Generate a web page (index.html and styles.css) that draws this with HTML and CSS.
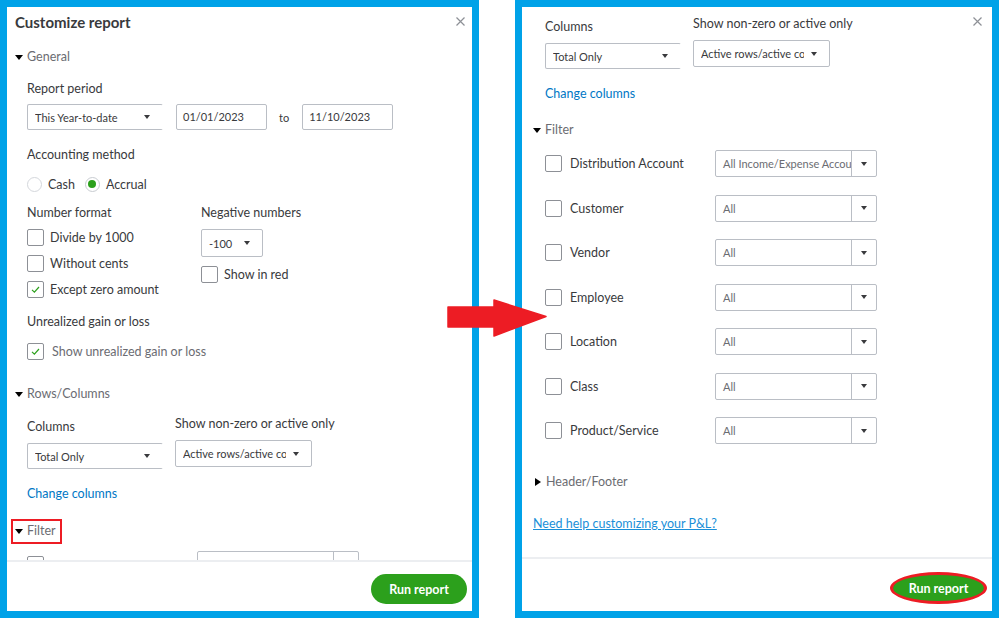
FILE: index.html
```html
<!DOCTYPE html>
<html lang="en">
<head>
  <meta charset="UTF-8">
  <meta name="viewport" content="width=device-width, initial-scale=1.0">
  <title>Customize report</title>
  <link rel="stylesheet" href="styles.css">
</head>
<body>
  <div class="stage">

    <!-- Before: dialog scrolled to the top -->
    <div class="panel panel-left">
      <span class="close-x">
        <svg width="9" height="9" viewBox="0 0 9 9"><path d="M0.5 0.5 L8.5 8.5 M8.5 0.5 L0.5 8.5" stroke="#8d9096" stroke-width="1.2" fill="none"/></svg>
      </span>
      <div class="panel-body">
        <h1 class="dlg-title">Customize report</h1>

        <div class="section-head mt-16"><span class="tri-down"></span>General</div>
        <div class="indent">
          <div class="label mt-14">Report period</div>
          <div class="date-row mt-6">
            <div class="select select-open w-136"><span class="val">This Year-to-date</span><span class="caret"></span></div>
            <div class="date-input">01/01/2023</div>
            <span class="to">to</span>
            <div class="date-input">11/10/2023</div>
          </div>

          <div class="label mt-16">Accounting method</div>
          <div class="radio-row mt-11">
            <span class="radio"></span><span class="radio-text">Cash</span>
            <span class="radio checked"></span><span class="radio-text">Accrual</span>
          </div>

          <div class="two-col mt-11">
            <div class="col-num">
              <div class="label">Number format</div>
              <div class="check-row mt-7"><span class="cbx"></span>Divide by 1000</div>
              <div class="check-row mt-9"><span class="cbx"></span>Without cents</div>
              <div class="check-row mt-9">
                <span class="cbx"><svg width="15" height="15" viewBox="0 0 15 15"><path d="M4 7.8 L6.4 10.2 L11 5" stroke="#2ca01c" stroke-width="1.2" fill="none"/></svg></span>Except zero amount
              </div>
            </div>
            <div>
              <div class="label">Negative numbers</div>
              <div class="select select-tall w-62 mt-7"><span class="val">-100</span><span class="caret"></span></div>
              <div class="check-row mt-9"><span class="cbx"></span>Show in red</div>
            </div>
          </div>

          <div class="label mt-15">Unrealized gain or loss</div>
          <div class="check-row check-soft mt-12">
            <span class="cbx"><svg width="15" height="15" viewBox="0 0 15 15"><path d="M4 7.8 L6.4 10.2 L11 5" stroke="#2ca01c" stroke-width="1.2" fill="none"/></svg></span>Show unrealized gain or loss
          </div>
        </div>

        <div class="section-head mt-25"><span class="tri-down"></span>Rows/Columns</div>
        <div class="indent">
          <div class="cols-row mt-15">
            <div class="col-cols">
              <div class="label">Columns</div>
              <div class="select select-open w-136 mt-7"><span class="val">Total Only</span><span class="caret"></span></div>
            </div>
            <div class="col-shift">
              <div class="label">Show non-zero or active only</div>
              <div class="select w-137 mt-7"><span class="val">Active rows/active columns</span><span class="caret"></span></div>
            </div>
          </div>
          <div class="label mt-16"><span class="link">Change columns</span></div>
        </div>

        <div class="section-head marked mt-16"><span class="tri-down"></span>Filter</div>
        <div class="indent">
          <!-- first filter row, only its top edge shows above the footer -->
          <div class="filter-row mt-7">
            <div class="filter-label"><span class="cbx"></span></div>
            <div class="fselect"><span class="val"></span><span class="fbtn"></span></div>
          </div>
        </div>
      </div>
      <div class="panel-foot">
        <button class="btn-run">Run report</button>
      </div>
    </div>

    <!-- After: same dialog scrolled down to the filters -->
    <div class="panel panel-right">
      <span class="close-x">
        <svg width="9" height="9" viewBox="0 0 9 9"><path d="M0.5 0.5 L8.5 8.5 M8.5 0.5 L0.5 8.5" stroke="#8d9096" stroke-width="1.2" fill="none"/></svg>
      </span>
      <div class="panel-body">
        <div class="indent">
          <div class="cols-row mt-11">
            <div class="col-cols">
              <div class="label">Columns</div>
              <div class="select select-open w-136 mt-7"><span class="val">Total Only</span><span class="caret"></span></div>
            </div>
            <div class="col-shift">
              <div class="label">Show non-zero or active only</div>
              <div class="select w-137 mt-7"><span class="val">Active rows/active columns</span><span class="caret"></span></div>
            </div>
          </div>
          <div class="label mt-16"><span class="link">Change columns</span></div>
        </div>

        <div class="section-head mt-18"><span class="tri-down"></span>Filter</div>
        <div class="indent">
          <div class="filter-row mt-11">
            <div class="filter-label"><span class="cbx"></span>Distribution Account</div>
            <div class="fselect"><span class="val">All Income/Expense Accounts</span><span class="fbtn"><span class="caret"></span></span></div>
          </div>
          <div class="filter-row next">
            <div class="filter-label"><span class="cbx"></span>Customer</div>
            <div class="fselect"><span class="val">All</span><span class="fbtn"><span class="caret"></span></span></div>
          </div>
          <div class="filter-row next">
            <div class="filter-label"><span class="cbx"></span>Vendor</div>
            <div class="fselect"><span class="val">All</span><span class="fbtn"><span class="caret"></span></span></div>
          </div>
          <div class="filter-row next">
            <div class="filter-label"><span class="cbx"></span>Employee</div>
            <div class="fselect"><span class="val">All</span><span class="fbtn"><span class="caret"></span></span></div>
          </div>
          <div class="filter-row next">
            <div class="filter-label"><span class="cbx"></span>Location</div>
            <div class="fselect"><span class="val">All</span><span class="fbtn"><span class="caret"></span></span></div>
          </div>
          <div class="filter-row next">
            <div class="filter-label"><span class="cbx"></span>Class</div>
            <div class="fselect"><span class="val">All</span><span class="fbtn"><span class="caret"></span></span></div>
          </div>
          <div class="filter-row next">
            <div class="filter-label"><span class="cbx"></span>Product/Service</div>
            <div class="fselect"><span class="val">All</span><span class="fbtn"><span class="caret"></span></span></div>
          </div>
        </div>

        <div class="section-head mt-29"><span class="tri-right"></span>Header/Footer</div>
        <div class="label mt-24"><span class="help-link">Need help customizing your P&amp;L?</span></div>
      </div>
      <div class="panel-foot">
        <button class="btn-run ring">Run report</button>
      </div>
    </div>

    <!-- Red arrow drawn over both screenshots -->
    <svg class="big-arrow" width="100" height="38" viewBox="0 0 100 38">
      <path d="M1 8 L47 8 L47 1 L99 17.5 L47 37 L47 28 L1 28 Z" fill="#ed1c24" stroke="#ed1c24" stroke-width="1.5" stroke-linejoin="round"/>
    </svg>
  </div>
</body>
</html>
```
FILE: styles.css
```css
/* Base */
* {
  margin: 0;
  padding: 0;
  box-sizing: border-box;
}

body {
  font-family: Lato, "Open Sans", sans-serif;
  font-size: 12.5px;
  color: #393a3d;
  background: #fff;
  width: 999px;
  height: 618px;
  overflow: hidden;
}

.stage {
  position: relative;
  display: flex;
  height: 618px;
}

/* Screenshot frames */
.panel {
  position: relative;
  display: flex;
  flex-direction: column;
  height: 618px;
  border: 7px solid #00a2e8;
  background: #fff;
}

.panel-left {
  width: 479px;
}

.panel-right {
  width: 484px;
  margin-left: 36px;
}

.panel-body {
  flex: 1;
  overflow: hidden;
  padding-left: 8px;
}

.panel-right .panel-body {
  padding-left: 11px;
}

.panel-foot {
  height: 51px;
  border-top: 2px solid #eceef1;
  display: flex;
  justify-content: flex-end;
  align-items: flex-start;
  padding: 12px 5px 0 0;
}

.panel-right .panel-foot {
  height: 54px;
  padding: 13px 5px 0 0;
}

.close-x {
  position: absolute;
  top: 10px;
  right: 7px;
  width: 9px;
  height: 9px;
  display: flex;
}

.panel-right .close-x {
  right: 10px;
}

/* Text */
.dlg-title {
  font-size: 15px;
  font-weight: 700;
  line-height: 20px;
  margin-top: 5px;
  color: #393a3d;
}

.section-head {
  display: flex;
  align-items: center;
  line-height: 18px;
  color: #6b6c72;
}

.tri-down {
  width: 0;
  height: 0;
  border-left: 4px solid transparent;
  border-right: 4px solid transparent;
  border-top: 5px solid #000;
  margin-right: 4px;
}

.tri-right {
  width: 0;
  height: 0;
  border-top: 4px solid transparent;
  border-bottom: 4px solid transparent;
  border-left: 6px solid #000;
  margin: 0 5px 0 2px;
}

/* red annotation box round the Filter heading */
.section-head.marked {
  width: 51px;
  margin-left: -4px;
  border: 2px solid #ed1c24;
  padding: 1px 0 2px 2px;
}

.indent {
  padding-left: 12px;
}

.label {
  line-height: 18px;
}

.link {
  color: #0077c5;
}

.help-link {
  color: #1a8fd8;
  text-decoration: underline;
}

/* Controls */
.select {
  display: flex;
  align-items: center;
  height: 26px;
  border: 1px solid #babec5;
  border-radius: 2px;
  font-size: 11px;
  padding: 0 12px 0 7px;
  background: #fff;
}

.select .val {
  flex: 1;
  white-space: nowrap;
  overflow: hidden;
  margin-right: 7px;
}

.select-open {
  border-right-color: transparent;
}

.select-tall {
  height: 28px;
}

.w-62 { width: 62px; }
.w-136 { width: 136px; }
.w-137 { width: 137px; height: 27px; }

.caret {
  width: 0;
  height: 0;
  border-left: 3px solid transparent;
  border-right: 3px solid transparent;
  border-top: 4px solid #393a3d;
  flex: none;
}

.date-row {
  display: flex;
  align-items: center;
}

.date-row .select {
  margin-right: 13px;
}

.date-input {
  width: 91px;
  height: 26px;
  line-height: 24px;
  border: 1px solid #babec5;
  border-radius: 2px;
  padding-left: 6px;
  font-size: 11px;
}

.to {
  font-size: 11px;
  margin: 0 13px 0 12px;
}

.radio-row {
  display: flex;
  align-items: center;
  height: 18px;
}

.radio {
  width: 15px;
  height: 15px;
  border: 1px solid #d4d7dc;
  border-radius: 50%;
  display: flex;
  align-items: center;
  justify-content: center;
}

.radio.checked {
  border-color: #c8ccd1;
  margin-left: 10px;
}

.radio.checked::after {
  content: "";
  width: 8px;
  height: 8px;
  border-radius: 50%;
  background: #2ca01c;
}

.radio-text {
  margin-left: 6px;
}

.two-col {
  display: flex;
  align-items: flex-start;
}

.col-num {
  width: 174px;
}

.check-row {
  display: flex;
  align-items: center;
  gap: 6px;
  height: 17px;
  line-height: 17px;
}

.check-soft {
  gap: 8px;
  color: #6b6c72;
}

.cbx {
  width: 17px;
  height: 17px;
  border: 1px solid #8d9096;
  border-radius: 2px;
  background: #fff;
  flex: none;
  display: flex;
}

.cols-row {
  display: flex;
  align-items: flex-start;
}

.col-cols {
  width: 148px;
}

.col-shift {
  margin-top: -3px;
}

.filter-row {
  display: flex;
  align-items: center;
  height: 27px;
}

.filter-row.next {
  margin-top: 17.5px;
}

.filter-label {
  width: 170px;
  display: flex;
  align-items: center;
  gap: 8px;
}

.fselect {
  display: flex;
  width: 162px;
  height: 27px;
  border: 1px solid #babec5;
  border-radius: 2px;
  font-size: 11px;
  color: #6b6c72;
}

.fselect .val {
  flex: 1;
  padding-left: 7px;
  line-height: 25px;
  white-space: nowrap;
  overflow: hidden;
}

.fbtn {
  width: 25px;
  border-left: 1px solid #babec5;
  display: flex;
  align-items: center;
  justify-content: center;
}

/* Run report */
.btn-run {
  width: 96px;
  height: 30px;
  border: none;
  border-radius: 16px;
  background: #2ca01c;
  color: #fff;
  font-family: inherit;
  font-size: 12.5px;
  font-weight: 700;
  cursor: pointer;
}

.btn-run.ring {
  width: 97px;
  height: 32px;
  border: 3px solid #ed1c24;
  border-radius: 50%;
}

/* Margins */
.mt-6 { margin-top: 6px; }
.mt-7 { margin-top: 7px; }
.mt-9 { margin-top: 9px; }
.mt-11 { margin-top: 11px; }
.mt-12 { margin-top: 12px; }
.mt-14 { margin-top: 14px; }
.mt-15 { margin-top: 15px; }
.mt-16 { margin-top: 16px; }
.mt-18 { margin-top: 18px; }
.mt-24 { margin-top: 24px; }
.mt-25 { margin-top: 25px; }
.mt-29 { margin-top: 29px; }

.big-arrow {
  position: absolute;
  left: 447px;
  top: 299px;
  z-index: 2;
}
```
